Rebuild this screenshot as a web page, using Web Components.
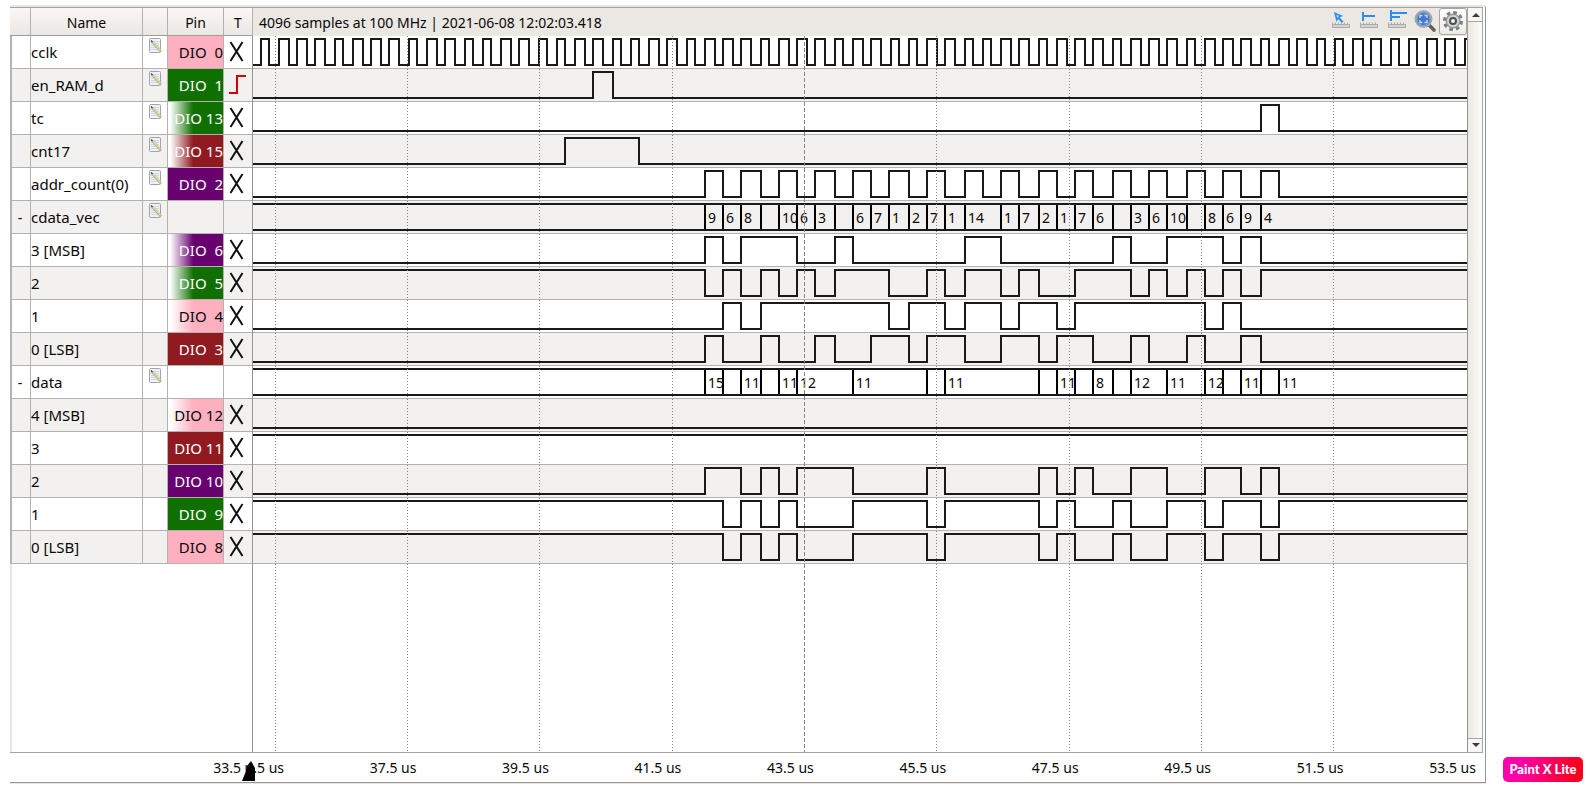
<!DOCTYPE html>
<html lang="en">
<head>
<meta charset="utf-8">
<title>Logic Analyzer</title>
<style>
  html { background: #fff; }
  body {
    margin: 0; min-height: 100vh; box-sizing: border-box; padding: 5px 10px 6px;
    display: flex; gap: 17px; align-items: stretch;
    font: 14px/20px "Noto Sans", "Open Sans", sans-serif; color: #080808;
  }
  logic-analyzer { flex: 1; min-width: 0; }
  brand-tag { align-self: flex-end; }
</style>
</head>
<body>
<logic-analyzer><span slot="title">4096 samples at 100 MHz | 2021-06-08 12:02:03.418</span></logic-analyzer>
<brand-tag>Paint X Lite</brand-tag>

<script>
const SPAN = 1214;

const define = (name, html, setup) => {
  const template = document.createElement('template');
  template.innerHTML = html;
  customElements.define(name, class extends HTMLElement {
    connectedCallback() {
      if (this.shadowRoot) return;
      const root = this.attachShadow({ mode: 'open' });
      root.append(template.content.cloneNode(true));
      if (setup) setup(this, root);
    }
  });
};

/* Clock edges land on a two-pixel grid. */
const snap = x => Math.floor((x - 1) / 2) * 2 + 1;
const clockEdges = () => {
  const edges = [];
  for (let n = 0; n < 66; n++) {
    const rise = 261.25 + n * 18.523;
    edges.push(snap(rise) - 253, snap(rise + 9.262) - 253);
  }
  return edges.filter(x => x < SPAN);
};
const at = text => text ? text.split(' ').map(x => x - 253) : [];

define('signal-wave', `
  <style>
    :host { display: block; height: 32px; }
    svg { display: block; width: 100%; height: 32px; }
    path { fill: none; stroke: #1a1a1a; stroke-width: 2; vector-effect: non-scaling-stroke; }
  </style>
  <svg viewBox="0 0 1214 32" preserveAspectRatio="none" aria-hidden="true"><path/></svg>`,
  (host, root) => {
    let high = host.getAttribute('start') === '1';
    const y = () => high ? 3 : 29;
    let d = `M-1 ${y()}`;
    const edges = host.hasAttribute('clock') ? clockEdges() : at(host.getAttribute('edges'));
    for (const x of edges) { d += `H${x}`; high = !high; d += `V${y()}`; }
    root.querySelector('path').setAttribute('d', d + `H${SPAN}`);
  });

define('bus-wave', `
  <style>
    :host { display: grid; height: 24px; margin: 2px 0; border: solid #1a1a1a; border-width: 2px 0; }
    span { box-sizing: border-box; white-space: nowrap;
           border-left: 2px solid #000; padding-left: 2px; height: 24px; line-height: 26px; }
    span:first-of-type { border-left: 0; }
  </style>`,
  (host, root) => {
    const cells = host.getAttribute('cells').split(' ').map(c => c.split(':'));
    const columns = [];
    let from = 0, label = '';
    const add = to => {
      const cell = document.createElement('span');
      columns.push(`minmax(0, ${to - from}fr)`);
      cell.textContent = label;
      root.append(cell);
    };
    for (const [x, text] of cells) { const to = x - 254; add(to); from = to; label = text; }
    add(SPAN);
    host.style.gridTemplateColumns = columns.join(' ');
  });

define('pin-badge', `<style>
    :host { display: block; box-sizing: border-box; height: 32px; line-height: 30px; padding: 1px 0 0; text-align: right; white-space: pre; color: #fff; background: var(--pin); }
    :host([color=pink]) { --pin: #ffb0c0; color: #080808; }
    :host([color=green]) { --pin: #0f7000; }
    :host([color=red]) { --pin: #911a20; }
    :host([color=purple]) { --pin: #680070; }
    :host([fade]) { background: linear-gradient(to right, #fff 4%, var(--pin) 46%); }
  </style><slot></slot>`);

define('trigger-mark', `
  <style>
    :host { display: block; }
    button { display: block; width: 28px; height: 32px; padding: 0; border: 0; background: none; }
    svg { display: block; }
    path { fill: none; stroke: #111; stroke-width: 2; }
    .rise { stroke: #d40000; }
  </style>
  <button type="button" aria-label="Trigger"><svg width="28" height="32" viewBox="0 0 28 32"><path/></svg></button>`,
  (host, root) => {
    const path = root.querySelector('path');
    const rise = host.hasAttribute('rise');
    if (rise) path.classList.add('rise');
    path.setAttribute('d', rise ? 'M5 24H13V7H22' : 'M6.500 6L18.500 25M18.500 6L6.500 25');
  });

define('edit-note', `
  <style>
    :host { display: block; height: 32px; }
    button { display: block; padding: 2px 0 0 6px; border: 0; background: none; }
    svg { display: block; }
  </style>
  <button type="button" aria-label="Edit"><svg width="13" height="16" viewBox="0 0 13 16">
    <rect x=".5" y=".5" width="11" height="14" rx="1" fill="#edf1f8" stroke="#a0a4aa"/>
    <path d="M2 3.500H10M2 5.500H10M2 7.500H10M2 9.500H10M2 11.500H10" stroke="#cbd7ea"/>
    <path d="M3 3.500L12 13.500" stroke="#b5ae78" stroke-width="2.600"/>
    <path d="M3.500 3.500L11.500 12.500" stroke="#ded89a" stroke-width="1.400"/>
    <path d="M2 2.500L3.500 4" stroke="#444" stroke-width="1.200"/>
  </svg></button>`);

define('tool-bar', `
  <style>
    :host { display: flex; flex: none; }
    button { width: 28px; height: 27px; padding: 0; border: 0; background: none; }
    button.on { border: 1px solid #aaa69f; border-radius: 3px; background: linear-gradient(#fefefe, #eeebe7); }
    svg { display: block; width: 28px; height: 27px; }
    .on svg { margin: -1px; }
    .blue { fill: none; stroke: #2c8df0; stroke-width: 2; }
    .rule { fill: #d3d3d3; stroke: #aaa; stroke-width: 1; }
  </style>
  <button type="button" aria-label="Cursor"><svg viewBox="0 0 28 27">
    <path d="M7 4L16 8L12.500 9.500L16.500 13.500L15 15L11 11L9.500 14Z" fill="#2c8df0"/><path d="M9.500 6.500L12 8L10 10Z" fill="#b8dcff"/>
    <path class="rule" d="M5.500 16V14.500M8.500 16V14.500M11.500 16V14.500M14.500 16V14.500M17.500 16V14.500M20.500 16V14.500M5.500 16.500H22.500V19.500H5.500Z"/></svg></button>
  <button type="button" aria-label="Vertical cursor"><svg viewBox="0 0 28 27">
    <path class="blue" d="M8 4V13M8 8H20"/>
    <path class="rule" d="M5.500 16V14.500M8.500 16V14.500M11.500 16V14.500M14.500 16V14.500M17.500 16V14.500M20.500 16V14.500M5.500 16.500H22.500V19.500H5.500Z"/></svg></button>
  <button type="button" aria-label="Cursor pair"><svg viewBox="0 0 28 27">
    <path class="blue" d="M8 2V13M8 5H24M8 9H17"/>
    <path class="rule" d="M5.500 16V14.500M8.500 16V14.500M11.500 16V14.500M14.500 16V14.500M17.500 16V14.500M20.500 16V14.500M5.500 16.500H22.500V19.500H5.500Z"/></svg></button>
  <button type="button" aria-label="Zoom to fit"><svg viewBox="0 0 28 27">
    <path d="M18 17L23 22" stroke="#606060" stroke-width="3.600" stroke-linecap="round"/>
    <circle cx="12.500" cy="11" r="8" fill="#4577c9" stroke="#a9a9a1" stroke-width="2"/>
    <circle cx="12.500" cy="11" r="6.500" fill="none" stroke="#7ea6e4"/>
    <path d="M9 10V7.500H11.500M13.500 7.500H16V10M16 12V14.500H13.500M11.500 14.500H9V12" fill="none" stroke="#c0d8fb" stroke-width="1.400"/></svg></button>
  <button type="button" class="on" aria-label="Settings"><svg viewBox="0 0 28 27">
    <circle cx="14" cy="13" r="8.500" fill="none" stroke="#7b8183" stroke-width="3.200" stroke-dasharray="3.600 3.075"/>
    <circle cx="14" cy="13" r="7" fill="#b3b8b9" stroke="#80888a"/>
    <circle cx="14" cy="13" r="5" fill="none" stroke="#d6dadb" stroke-width="1.500"/>
    <circle cx="14" cy="13" r="3" fill="#f2f2f0" stroke="#4c5254" stroke-width="2"/></svg></button>`);

define('scroll-rail', `
  <style>
    :host { display: flex; flex-direction: column; justify-content: space-between; box-sizing: border-box; width: 16px;
            border: solid #a8a4a0; border-width: 0 1px 0 1px; background: linear-gradient(to right, #ece8e3, #fdfcfb); }
    button { display: block; height: 14px; width: 14px; padding: 0; border: 0; background: #f8f6f4; }
    button:first-of-type { border-bottom: 1px solid #a8a4a0; }
    button:last-of-type { border-top: 1px solid #a8a4a0; }
    svg { display: block; }
  </style>
  <button type="button" aria-label="Scroll up"><svg width="14" height="13"><path d="M4 9L8 5L12 9Z" fill="#3c3c3c"/></svg></button>
  <button type="button" aria-label="Scroll down"><svg width="14" height="13"><path d="M4 4L8 8L12 4Z" fill="#3c3c3c"/></svg></button>`);

define('time-grid', `
  <style>
    :host { display: block; }
    svg { display: block; width: 100%; height: 100%; }
    path { fill: none; stroke: #858585; stroke-width: 1; stroke-dasharray: 1 2; vector-effect: non-scaling-stroke; }
    .center { stroke-dasharray: 4 2; }
  </style>
  <svg viewBox="0 0 1214 716" preserveAspectRatio="none" aria-hidden="true">
    <path d="M22.500 0V716M154.500 0V716M286.500 0V716M419.500 0V716M683.500 0V716M816.500 0V716M948.500 0V716M1080.500 0V716"/>
    <path class="center" d="M551.500 0V716"/>
  </svg>`);

define('time-axis', `
  <style>
    :host { display: flex; height: 29px; padding-right: 10px; line-height: 30px; text-align: right; }
    span { flex: 1 1 0; white-space: pre; }
    .first { flex: 0 0 274px; display: flex; justify-content: flex-end; position: relative; }
    .first span { flex: none; }
    svg { position: absolute; left: 232px; top: 8px; }
  </style>
  <div class="first"><span>33.5 u</span><span>.5 us</span><svg width="14" height="20" viewBox="0 0 14 20" aria-hidden="true"><path d="M0 20L2 15L4 10L5 5L9 0L13 7V20Z"/></svg></div>
  <span>37.5 us</span><span>39.5 us</span><span>41.5 us</span><span>43.5 us</span><span>45.5 us</span><span>47.5 us</span><span>49.5 us</span><span>51.5 us</span><span>53.5 us</span>`);

define('brand-tag', `
  <style>
    :host { display: block; box-sizing: border-box; width: 80px; height: 25px; margin-bottom: 2px; border-radius: 5px; text-align: center;
            font: 900 13px/25px Lato, sans-serif; white-space: nowrap; color: #fff; background: linear-gradient(100deg, #ff00aa 20%, #fa0020 90%); }
  </style><slot></slot>`);

const DATA_EDGES = '723 741 761 779 797 853 927 945 1039 1057 1075 1113 1131 1167 1205 1223 1261 1279';
const ROWS = [
  { name: 'cclk', edit: 1, pin: 'DIO  0', color: 'pink', clock: 1 },
  { name: 'en_RAM_d', edit: 1, pin: 'DIO  1', color: 'green', rise: 1, edges: '593 613' },
  { name: 'tc', edit: 1, pin: 'DIO 13', color: 'green', fade: 1, edges: '1261 1279' },
  { name: 'cnt17', edit: 1, pin: 'DIO 15', color: 'red', fade: 1, edges: '565 639' },
  { name: 'addr_count(0)', edit: 1, pin: 'DIO  2', color: 'purple', edges: '705 723 741 761 779 797 815 835 853 871 889 909 927 945 965 983 1001 1019 1039 1057 1075 1093 1113 1131 1149 1167 1187 1205 1223 1241 1261 1279' },
  { name: 'cdata_vec', edit: 1, cells: '705:9 723:6 741:8 761: 779:10 797:6 815:3 835: 853:6 871:7 889:1 909:2 927:7 945:1 965:14 1001:1 1019:7 1039:2 1057:1 1075:7 1093:6 1113: 1131:3 1149:6 1167:10 1187: 1205:8 1223:6 1241:9 1261:4' },
  { name: '3 [MSB]', pin: 'DIO  6', color: 'purple', fade: 1, edges: '705 723 741 797 835 853 965 1001 1113 1131 1167 1223 1241 1261' },
  { name: '2', pin: 'DIO  5', color: 'green', fade: 1, start: 1, edges: '705 723 741 761 779 797 815 835 889 927 945 965 1001 1019 1039 1075 1131 1149 1167 1187 1205 1223 1241 1261' },
  { name: '1', pin: 'DIO  4', color: 'pink', fade: 1, edges: '723 741 761 889 909 945 965 1001 1019 1057 1075 1205 1223 1241' },
  { name: '0 [LSB]', pin: 'DIO  3', color: 'red', edges: '705 723 761 779 815 835 871 909 927 965 1001 1039 1057 1093 1131 1149 1187 1205 1241 1261' },
  { name: 'data', edit: 1, cells: '705:15 723: 741:11 761: 779:11 797:12 853:11 927: 945:11 1039: 1057:11 1075: 1093:8 1113: 1131:12 1167:11 1205:12 1223: 1241:11 1261: 1279:11' },
  { name: '4 [MSB]', pin: 'DIO 12', color: 'pink', fade: 1 },
  { name: '3', pin: 'DIO 11', color: 'red', start: 1 },
  { name: '2', pin: 'DIO 10', color: 'purple', edges: '705 741 761 779 797 853 927 945 1039 1057 1075 1093 1131 1167 1205 1241 1261 1279' },
  { name: '1', pin: 'DIO  9', color: 'green', start: 1, edges: DATA_EDGES },
  { name: '0 [LSB]', pin: 'DIO  8', color: 'pink', start: 1, edges: DATA_EDGES },
];

const rowHtml = r => `<tr>
  <td class="fold">${r.cells ? '<button type="button" aria-label="Collapse">-</button>' : ''}</td>
  <td class="name">${r.name}</td>
  <td>${r.edit ? '<edit-note></edit-note>' : ''}</td>
  <td class="pin">${r.pin ? `<pin-badge color="${r.color}"${r.fade ? ' fade' : ''}>${r.pin}</pin-badge>` : ''}</td>
  <td>${r.pin ? `<trigger-mark${r.rise ? ' rise' : ''}></trigger-mark>` : ''}</td>
  <td class="wave">${r.cells ? `<bus-wave cells="${r.cells}"></bus-wave>`
    : `<signal-wave start="${r.start || 0}" ${r.clock ? 'clock' : `edges="${r.edges || ''}"`}></signal-wave>`}</td>
</tr>`;

define('logic-analyzer', `
  <style>
    :host { display: flex; flex-direction: column; box-sizing: border-box; border: solid #eae6e1; border-width: 2px 0 1px;
            box-shadow: inset -1px 0 #8a9aa8; }
    .main { flex: 1; display: flex; margin-right: 3px; border: solid #a8a4a0; border-width: 1px 0; }
    .sheet { flex: 1; min-width: 0; position: relative; box-shadow: inset 2px 0 #eae6e1; }
    table { width: 100%; table-layout: fixed; border-collapse: separate; border-spacing: 0; }
    th { height: 27px; padding: 0; font-weight: 400; border: solid #b4b0ad; border-width: 0 1px 1px 0; border-bottom-color: #a09c99; background: linear-gradient(#faf7f5, #ebe7e3); vertical-align: top; line-height: 30px; }
    th:last-child { border: 0; background: #ebe7e2; }
    th div { height: 27px; }
    td { height: 32px; padding: 0; vertical-align: top; border: solid #b5b1af; border-width: 0 1px 1px 0; background: #fff; }
    tbody tr:nth-child(even) td { background: #f2f1f0; }
    td.fold { box-shadow: inset 2px 0 #b9b3af; text-align: center; }
    td.fold button { display: block; width: 100%; height: 32px; padding: 1px 0 0; border: 0; background: none; font: inherit; line-height: 30px; color: inherit; }
    td.name, td.pin { font-size: 15px; white-space: nowrap; }
    td.name { box-sizing: border-box; height: 33px; padding-top: 1px; line-height: 30px; }
    td.wave { border-right: 0; }
    th .head { display: flex; height: 28px; }
    .head slot { flex: 1; display: block; padding-left: 6px; text-align: left; white-space: nowrap; }
    .overlay { position: absolute; left: 242px; right: -1px; top: 28px; bottom: 0; border: solid #949494; border-width: 0 1px; pointer-events: none; }
    .overlay time-grid { height: 100%; }
    time-axis { border-bottom: 1px solid #999594; }
  </style>
  <div class="main">
    <div class="sheet">
      <table>
        <colgroup><col style="width:21px"><col style="width:112px"><col style="width:25px"><col style="width:56px"><col style="width:29px"><col></colgroup>
        <thead><tr><th></th><th><div>Name</div></th><th></th><th><div>Pin</div></th><th><div>T</div></th><th><div class="head"><slot name="title"></slot><tool-bar></tool-bar></div></th></tr></thead>
        <tbody>${ROWS.map(rowHtml).join('')}</tbody>
      </table>
      <div class="overlay"><time-grid></time-grid></div>
    </div>
    <scroll-rail></scroll-rail>
  </div>
  <time-axis></time-axis>`);
</script>
</body>
</html>
